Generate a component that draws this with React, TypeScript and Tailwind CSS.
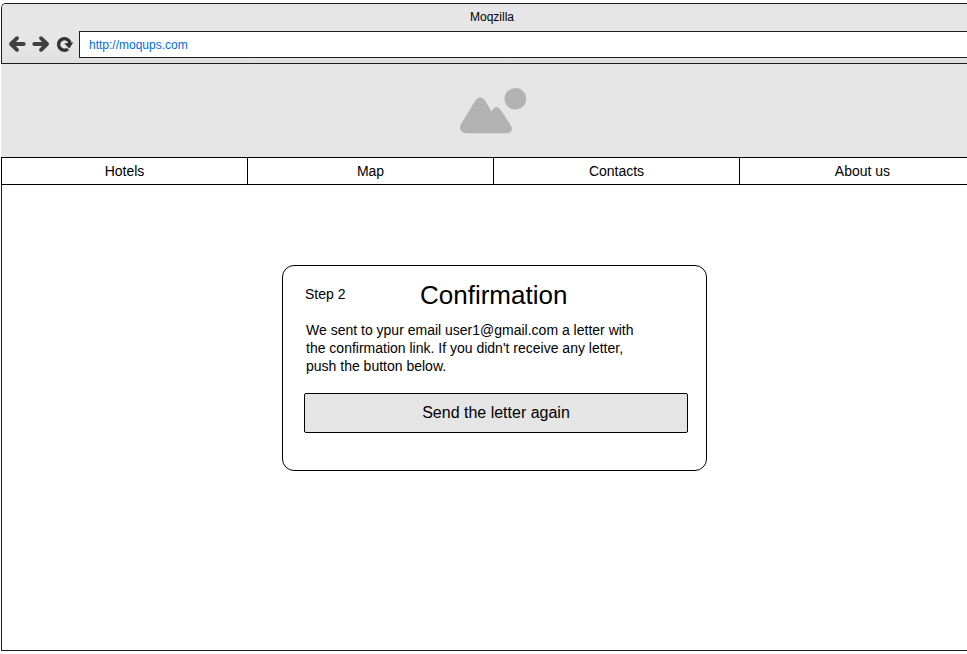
const navItems = ['Hotels', 'Map', 'Contacts', 'About us'];

function ArrowIcon({ flipped = false }: { flipped?: boolean }) {
  return (
    <svg width="18" height="18" viewBox="0 0 18 18" className={flipped ? 'block -scale-x-100' : 'block'}>
      <path
        d="M9 3.2 3 9l6 5.8M3.8 9H15.7"
        fill="none"
        stroke="#404040"
        strokeWidth="3.9"
        strokeLinecap="round"
        strokeLinejoin="round"
      />
    </svg>
  );
}

function ReloadIcon() {
  return (
    <svg width="18" height="18" viewBox="0 0 18 18" className="block">
      <path d="M12 14A5.8 5.8 0 1 1 14 8" fill="none" stroke="#333" strokeWidth="3.4" />
      <path d="M8.2 8.4 17.3 7.2 13.4 13.6Z" fill="#333" />
    </svg>
  );
}

function Toolbar() {
  return (
    <header className="flex h-[59px] flex-col rounded-tl-[4px] bg-linear-to-b from-[#e6e6e6] from-60% to-[#e0e0e0]">
      <div className="h-[27px] pr-1 pl-[19px] text-center text-xs leading-[27px]">Moqzilla</div>
      <div className="flex h-[27px]">
        <div className="flex w-[77px] items-center gap-1.5 pb-0.5 pl-1.5">
          <ArrowIcon />
          <ArrowIcon flipped />
          <ReloadIcon />
        </div>
        <div className="flex-1 border border-r-0 border-[#1c1c1c] bg-white pl-[9px] text-xs leading-[26px] text-[#006be6]">
          http://moqups.com
        </div>
      </div>
    </header>
  );
}

export default function App() {
  return (
    <div className="h-[654px] w-[967px] overflow-hidden bg-white pt-[3px] pl-px font-['Liberation_Sans',Arial,sans-serif] text-black">
      <div className="h-[648px] rounded-tl-[5px] border border-r-0 border-[#1c1c1c]">
        <Toolbar />
        <div className="-ml-px h-[94px] border-t border-[#1c1c1c] bg-[#e5e5e5] pt-[23px] pl-[459px]">
          <svg width="68" height="48" viewBox="0.5 -0.7 68 48" fill="#b2b2b2">
            <path d="M7 45.5H47.5C52.5 45.5 53.5 41 51.5 38L41.5 22.5C39 18.7 35.5 18.7 33.2 22L31.9 23.5 25.9 13.5C22.9 8.5 18.4 8.5 15.4 13.5L1.5 36.5C-1 41 2 45.5 7 45.5Z" />
            <circle cx="55.8" cy="11" r="10.8" />
          </svg>
        </div>
        <nav className="-ml-px flex h-7 w-[985px] border-y border-black">
          {navItems.map((item) => (
            <div key={item} className="w-[246px] border-l border-black text-center text-sm leading-[27px]">
              {item}
            </div>
          ))}
        </nav>
        <main className="pt-20 pl-[280px]">
          <section className="h-[206px] w-[425px] rounded-xl border border-black pt-[11px] pl-[21px]">
            <div className="flex h-9 items-center">
              <span className="w-[116px] pb-0.5 pl-px text-sm">Step 2</span>
              <h1 className="text-[26px] leading-9">Confirmation</h1>
            </div>
            <p className="mt-2 w-[350px] pl-0.5 text-sm leading-[18px]">
              We sent to ypur email user1@gmail.com a letter with
              <br />
              the confirmation link. If you didn't receive any letter,
              <br />
              push the button below.
            </p>
            <button className="mt-[18px] block h-10 w-96 rounded-[2px] border border-black bg-[#e5e5e5] text-base">
              Send the letter again
            </button>
          </section>
        </main>
      </div>
    </div>
  );
}
